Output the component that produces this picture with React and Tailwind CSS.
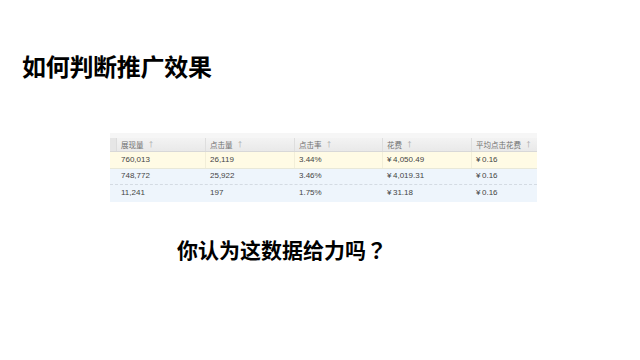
import React from "react";

const cols = "grid grid-cols-[7px_89px_89px_88px_89px_65px]";

const headers = ["展现量", "点击量", "点击率", "花费", "平均点击花费"];
const rows = [
  { bg: "bg-[#fffbe5]", cells: ["760,013", "26,119", "3.44%", "4,050.49", "0.16"], border: "border-b border-[#e8e8d8]" },
  { bg: "bg-[#eef5fc]", cells: ["748,772", "25,922", "3.46%", "4,019.31", "0.16"], border: "border-b border-dashed border-[#d4dbe3]" },
  { bg: "bg-[#eef5fc]", cells: ["11,241", "197", "1.75%", "31.18", "0.16"], border: "" },
];

export default function App() {
  return (
    <div className="w-[640px] h-[360px] bg-white relative overflow-hidden" style={{ fontFamily: '"Liberation Sans", "Noto Sans CJK SC", sans-serif' }}>
      <div className="pt-[51px] pl-[22px]">
        <h1 className="text-[24px] leading-[30px] font-bold text-black tracking-[-0.3px]" style={{ fontFamily: '"Noto Sans CJK SC", sans-serif' }}>
          如何判断推广效果
        </h1>
      </div>
      <div className="mt-[52px] ml-[110px] w-[427px]">
        <div className="h-[5px] bg-[#f6f6f6]" />
        <div className={`${cols} h-[14px] bg-gradient-to-b from-[#f3f3f3] to-[#e9e9e9] border-b border-[#d8d8d8]`}>
          <div className="bg-[#e6e6e6] border-r border-[#dcdcdc]" />
          {headers.map((h, i) => (
            <div key={i} className={`flex items-center pl-[4px] text-[7.5px] text-[#707070] ${i < 4 ? "border-r border-[#dedede]" : ""}`} style={{ fontFamily: '"Noto Sans CJK SC", sans-serif' }}>
              <span>{h}</span>
              <span className="ml-[4px] text-[#a0a0a0] text-[7px]">↑</span>
            </div>
          ))}
        </div>
        {rows.map((r, ri) => (
          <div key={ri} className={`${cols} h-[16.5px] ${r.bg} ${r.border}`}>
            <div />
            {r.cells.map((c, ci) => (
              <div key={ci} className={`flex items-center pl-[4px] text-[8px] text-[#444] ${ri === 0 && ci < 4 ? "border-r border-[#f2eed8]" : ""}`}>
                {ci >= 3 && <span className="mr-[1.5px]">¥</span>}
                {c}
              </div>
            ))}
          </div>
        ))}
      </div>
      <div className="mt-[34px] pl-[177px]">
        <p className="text-[21px] leading-[26px] font-bold text-black" style={{ fontFamily: '"Noto Sans CJK SC", sans-serif' }}>
          你认为这数据给力吗<span style={{ fontFamily: '"Noto Sans CJK JP", sans-serif' }}>？</span>
        </p>
      </div>
    </div>
  );
}
